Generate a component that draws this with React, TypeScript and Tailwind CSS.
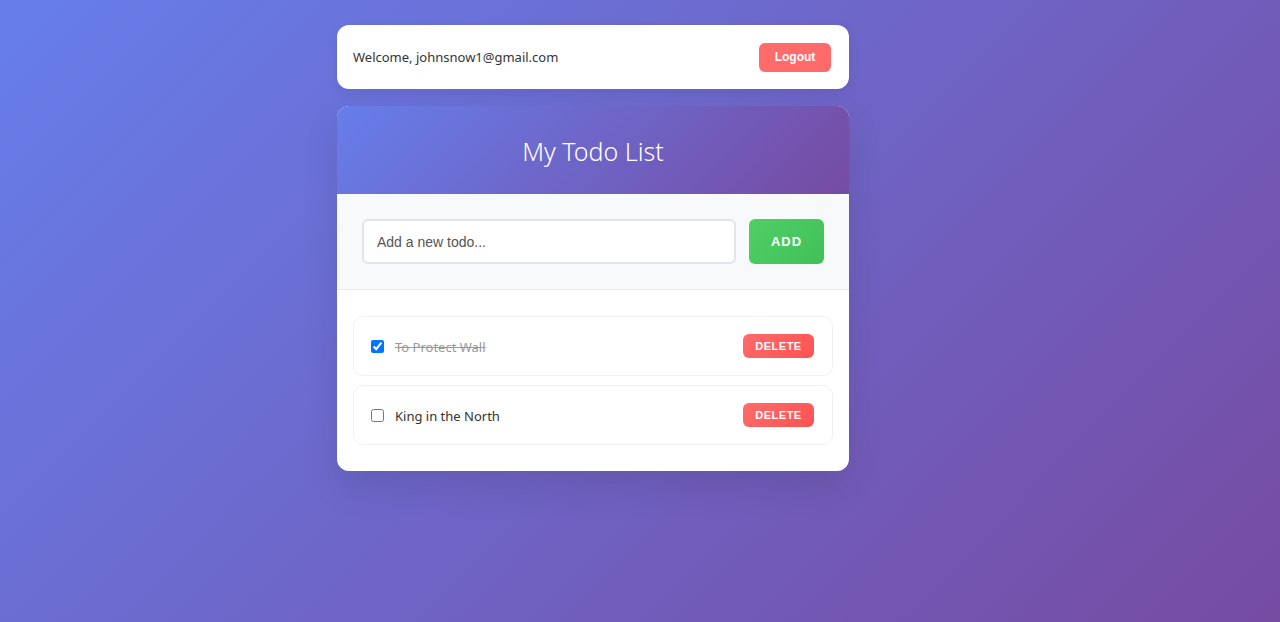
import { useState } from "react";

type Todo = { id: number; text: string; done: boolean };

export default function App() {
  const [todos, setTodos] = useState<Todo[]>([
    { id: 1, text: "To Protect Wall", done: true },
    { id: 2, text: "King in the North", done: false },
  ]);

  const toggle = (id: number) =>
    setTodos((t) => t.map((x) => (x.id === id ? { ...x, done: !x.done } : x)));

  return (
    <div
      className="min-h-[622px] w-full bg-[linear-gradient(135deg,#667eea_0%,#764ba2_100%)] pt-[25px]"
      style={{ fontFamily: '"Noto Sans", "Open Sans", sans-serif' }}
    >
      <div className="ml-[337px] flex w-[512px] flex-col gap-[17px]">
        {/* user bar */}
        <div className="flex h-16 items-center justify-between rounded-xl bg-white pl-4 pr-[18px] shadow-[0_4px_12px_rgba(0,0,0,0.08)]">
          <span className="mt-[2px] text-[13px] text-[#333]">Welcome, johnsnow1@gmail.com</span>
          <button className="h-[29px] w-[72px] rounded-md bg-[#ff6b6b] font-['Liberation_Sans',Arial,sans-serif] text-[12px] font-bold text-white">
            Logout
          </button>
        </div>

        {/* todo card */}
        <div className="overflow-hidden rounded-xl bg-white shadow-[0_15px_35px_rgba(0,0,0,0.1)]">
          <div className="flex h-[88px] items-center justify-center bg-[linear-gradient(135deg,#667eea_0%,#764ba2_100%)]">
            <h1 className="mt-[4px] text-[25px] font-light text-white">My Todo List</h1>
          </div>

          <div className="flex gap-[13px] border-b border-[#e9ecef] bg-[#f8f9fa] px-[25px] py-[25px]">
            <input
              placeholder="Add a new todo..."
              className="h-[45px] flex-1 rounded-md border-2 border-[#e1e5e9] bg-white px-[13px] font-['Liberation_Sans',Arial,sans-serif] text-[14px] text-[#333] outline-none placeholder:text-[#555]"
            />
            <button className="h-[45px] w-[75px] rounded-md bg-[linear-gradient(135deg,#51cf66,#40c057)] font-['Liberation_Sans',Arial,sans-serif] text-[13px] font-bold tracking-[1px] text-white">
              ADD
            </button>
          </div>

          <div className="flex flex-col gap-[9px] px-4 pb-[26px] pt-[26px]">
            {todos.map((todo) => (
              <div
                key={todo.id}
                className="flex h-[60px] items-center rounded-[10px] border border-[#eef0f2] bg-white pl-[17px] pr-[18px]"
              >
                <input
                  type="checkbox"
                  checked={todo.done}
                  onChange={() => toggle(todo.id)}
                  className="m-0 h-[13px] w-[13px] accent-[#0075ff]"
                />
                <span
                  className={`ml-[11px] mt-[3px] flex-1 text-[13px] ${
                    todo.done ? "text-[#999] line-through" : "text-[#333]"
                  }`}
                >
                  {todo.text}
                </span>
                <button className="h-[24px] w-[71px] rounded-md bg-[linear-gradient(135deg,#ff6b6b,#ff5252)] font-['Liberation_Sans',Arial,sans-serif] text-[11px] font-bold tracking-[0.5px] text-white">
                  DELETE
                </button>
              </div>
            ))}
          </div>
        </div>
      </div>
    </div>
  );
}
